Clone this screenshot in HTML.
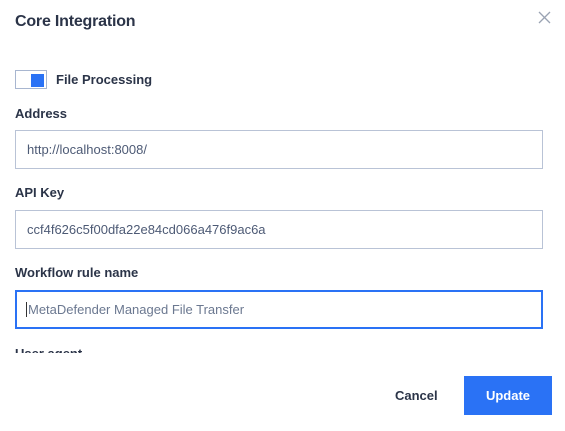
<!DOCTYPE html>
<html><head><style>
body{margin:0;width:565px;height:431px;background:#fff;font-family:"Liberation Sans",sans-serif;position:relative;overflow:hidden;color:#2b3448}
.a{position:absolute}
.lbl{position:absolute;left:15px;font-size:13px;font-weight:bold;color:#2b3448}
.inp{position:absolute;left:15px;width:526px;height:37px;border:1px solid #b9c3d6;box-sizing:content-box;font-size:13px;color:#4d5a75;line-height:37px;text-indent:11px}
</style></head><body>
<div class="a" style="left:15px;top:13px;font-size:16px;color:#2b3448;font-weight:bold;letter-spacing:-0.2px">Core Integration</div>
<svg class="a" style="left:538px;top:11px" width="13" height="13"><path d="M1 1L12 12M12 1L1 12" stroke="#9aa3b3" stroke-width="1.3"/></svg>
<div class="a" style="left:15px;top:70px;width:32px;height:19px;border:1px solid #a8b6d0;box-sizing:border-box"></div>
<div class="a" style="left:31px;top:74px;width:13px;height:13px;background:#2a72f5"></div>
<div class="a" style="left:56px;top:72px;font-size:13px;font-weight:bold">File Processing</div>
<div class="lbl" style="top:106px">Address</div>
<div class="inp" style="top:130px">http://localhost:8008/</div>
<div class="lbl" style="top:185px">API Key</div>
<div class="inp" style="top:210px">ccf4f626c5f00dfa22e84cd066a476f9ac6a</div>
<div class="lbl" style="top:265px">Workflow rule name</div>
<div class="inp" style="top:290px;border:2px solid #2a72f5;width:524px;height:35px;line-height:35px;text-indent:9px;color:#6b7890"><span style="border-left:1px solid #333;padding-left:1px">MetaDefender Managed File Transfer</span></div>
<div class="a" style="left:15px;top:346px;height:7px;overflow:hidden;width:200px"><div class="lbl" style="left:0;top:0">User agent</div></div>
<div class="a" style="left:395px;top:388px;font-size:13px;font-weight:bold">Cancel</div>
<div class="a" style="left:464px;top:376px;width:88px;height:39px;background:#2a72f5;color:#fff;font-size:13px;font-weight:bold;text-align:center;line-height:39px">Update</div>
</body></html>
